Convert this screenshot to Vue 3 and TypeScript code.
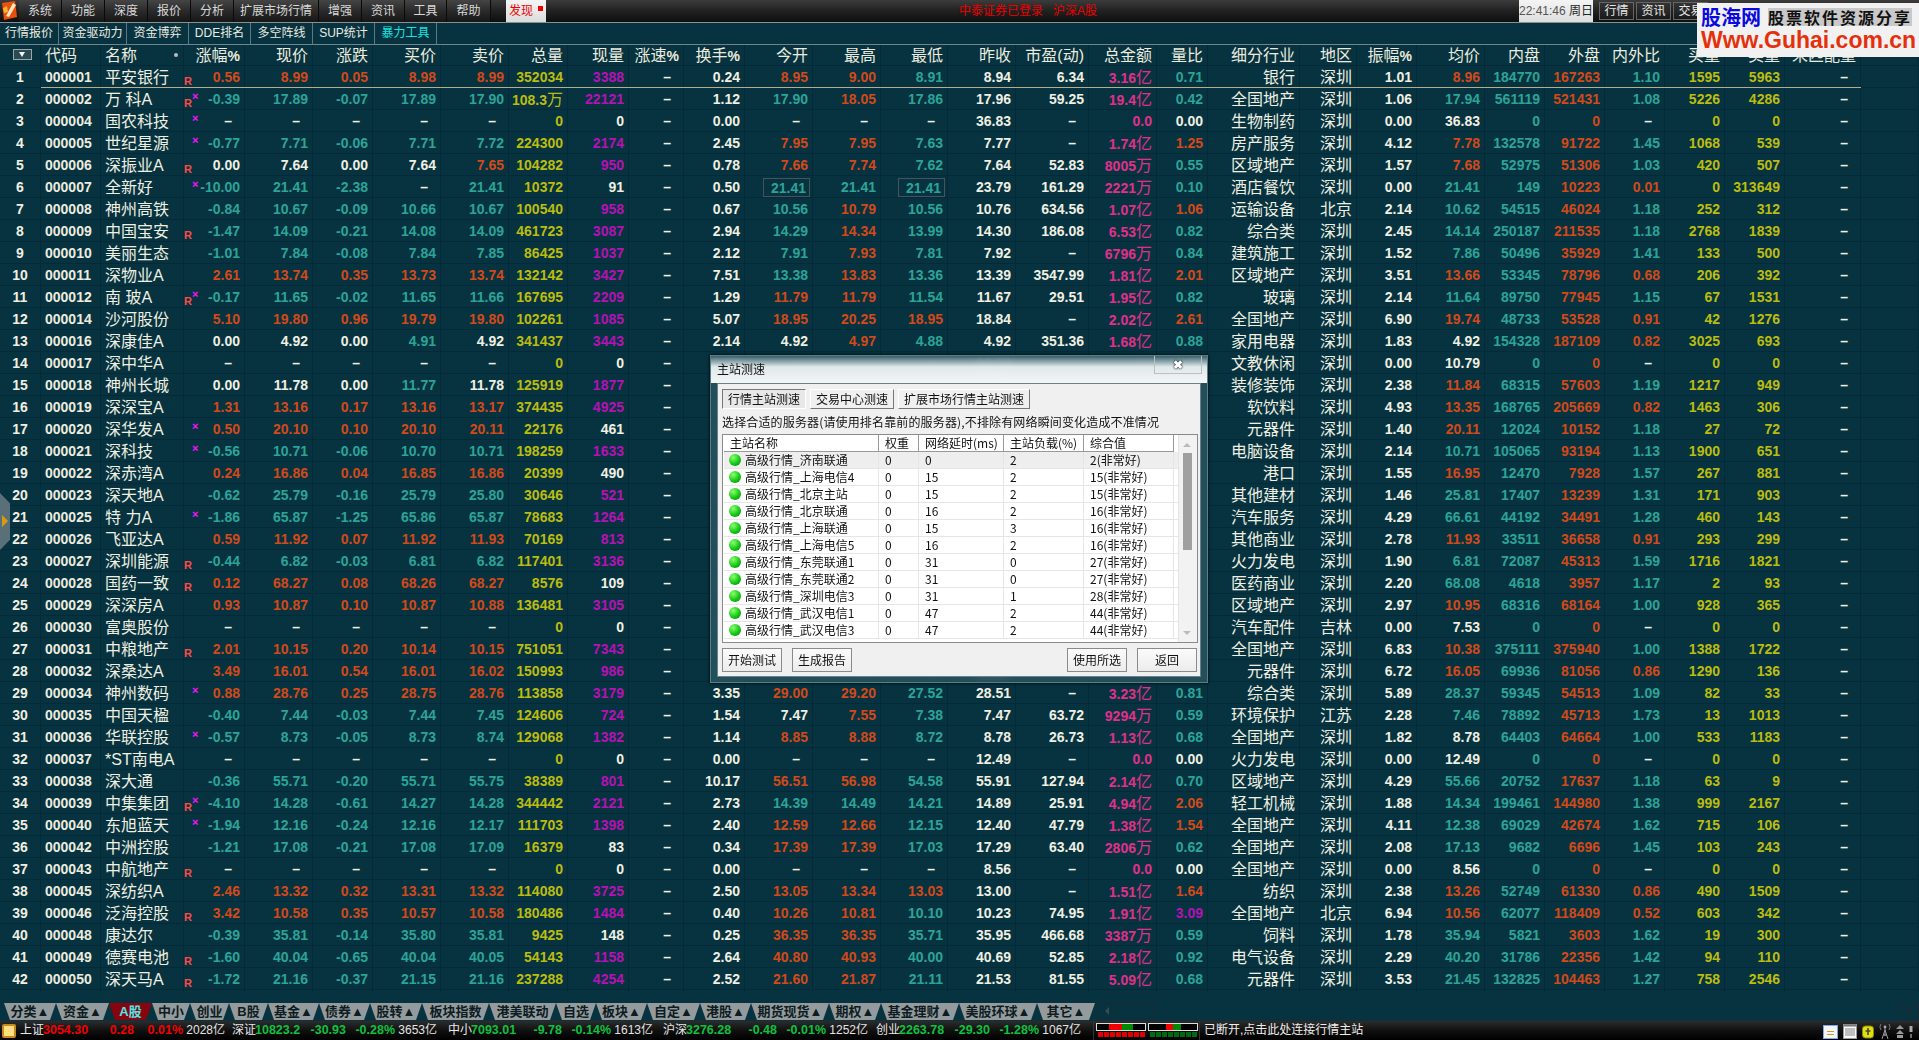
<template>
  <div class="app">
    <!-- top menu -->
    <div class="menubar">
      <svg class="logo" width="19" height="21" viewBox="0 0 19 21">
        <path d="M2 3 L15 1 L17 17 L4 20 Z" fill="#e8500f" />
        <path d="M6 16 L13 3 L16 5 L9 17 Z" fill="#ffe8c0" />
        <path d="M3 8 L7 6 L8 12 L4 13 Z" fill="#ffb030" />
      </svg>
      <div v-for="m in menus" :key="m.t" class="menu-item" :style="{ width: m.w + 'px' }">{{ m.t }}</div>
      <div class="find-tab">发现<i></i></div>
      <div class="login-msg">中泰证券已登录&nbsp;&nbsp;&nbsp;沪深A股</div>
      <div class="clock"><span class="clock-time">22:41:46</span> 周日</div>
      <div class="top-btn">行情</div>
      <div class="top-btn">资讯</div>
      <div class="top-btn">交易</div>
    </div>

    <!-- function tabs -->
    <div class="funcbar">
      <div v-for="f in funcs" :key="f.t" class="func-item" :class="{ cyan: f.t === '暴力工具' }" :style="{ width: f.w + 'px' }">{{ f.t }}</div>
    </div>

    <!-- quote table -->
    <div class="table">
      <div class="grid head">
        <div class="hcell center"><span class="sort-box"><i></i></span></div>
        <div class="hcell left code-h">代码</div>
        <div class="hcell left name-h">名称<b class="dot"></b></div>
        <div v-for="h in heads" :key="h" class="hcell"><template v-for="(p, i) in splitPct(h)" :key="i"><span :class="{ pct: p === '%' }">{{ p }}</span></template></div>
        <div class="hcell"></div>
      </div>
      <div v-for="r in rows" :key="r.no" class="grid row" :class="{ selected: r.no === 1 }">
        <div class="c no">{{ r.no }}</div>
        <div class="c code">{{ r.code }}</div>
        <div class="c name">{{ r.name }}</div>
        <div v-for="(c, i) in r.cells" :key="i" class="c num" :class="[c.cls, { dash: c.text === '–', cjk: c.cjk, marks: i === 0 }]">
          <template v-if="i === 0">
            <em v-if="r.mark.includes('R')" class="mark-r">R</em>
            <em v-if="r.mark.includes('x')" class="mark-x">×</em>
          </template>
          <span :class="{ boxed: c.boxed }">{{ c.text }}<span v-if="c.unit" class="unit">{{ c.unit }}</span></span>
        </div>
        <div class="c"></div>
      </div>
    </div>

    <!-- sheet tabs -->
    <div class="sheets">
      <div v-for="s in sheets" :key="s.t" class="sheet" :class="{ on: s.t === 'A股' }" :style="{ width: s.w + 'px' }">{{ s.t }}</div>
      <div class="scroll-box"><i class="tri-l"></i></div>
      <div class="scroll-end"><i class="tri-r"></i></div>
    </div>

    <!-- status bar -->
    <div class="status">
      <span class="st-icon"></span>
      <div v-for="g in indexes" :key="g.n" class="st-group" :style="{ width: g.w + 'px' }">
        <span class="st-name">{{ g.n }}</span>
        <span class="st-val" :class="g.up ? 'red' : 'green'">{{ g.v }}</span>
        <span class="st-chg" :class="g.up ? 'red' : 'green'">{{ g.c }}</span>
        <span class="st-pct" :class="g.up ? 'red' : 'green'">{{ g.p }}</span>
        <span class="st-amt">{{ g.a }}</span>
      </div>
      <div class="meters">
        <div class="meter">
          <div class="bar"><i class="k" style="width:12px"></i><i class="r" style="width:13px"></i><i class="g" style="width:11px"></i><i class="k" style="width:12px"></i></div>
          <div class="ticks"><i v-for="n in 8" :key="n" class="r"></i></div>
        </div>
        <div class="meter">
          <div class="bar"><i class="k" style="width:17px"></i><i class="r" style="width:7px"></i><i class="g" style="width:8px"></i><i class="k" style="width:16px"></i></div>
          <div class="ticks"><i v-for="n in 8" :key="n" class="g"></i></div>
        </div>
      </div>
      <div class="st-msg">已断开,点击此处连接行情主站</div>
      <div class="tray">
        <svg width="15" height="14" viewBox="0 0 15 14"><rect x="0.5" y="0.5" width="14" height="13" fill="#f4f4ff" stroke="#7fa8e0" /><rect x="4" y="6" width="7" height="1" fill="#c8a000" /><rect x="4" y="9" width="7" height="1" fill="#c8a000" /></svg>
        <svg width="14" height="15" viewBox="0 0 14 15"><rect x="0.5" y="0.5" width="13" height="14" fill="#f8f8f8" stroke="#999" /><rect x="0.5" y="0.5" width="13" height="2" fill="#777" /><path d="M2 5h10M2 7h10M2 9h10M2 11h10" stroke="#888" /></svg>
        <svg width="12" height="14" viewBox="0 0 12 14"><rect x="0.5" y="1" width="11" height="12" rx="3" fill="#e0e010" stroke="#8a8a00" /><path d="M6 3v7M3.5 6h5" stroke="#444" stroke-width="1.6" /></svg>
        <svg width="12" height="17" viewBox="0 0 12 17"><path d="M6 5v8M3 16 L6 7 L9 16M4 12h4" stroke="#999" fill="none" /><path d="M2 1a5 5 0 0 0 0 6M10 1a5 5 0 0 1 0 6" stroke="#777" fill="none" /><circle cx="6" cy="4" r="1.4" fill="#aaa" /></svg>
        <svg width="8" height="14" viewBox="0 0 8 14"><path d="M4 0 L8 4 H0 Z M4 5 L8 9 H0 Z" fill="#999" /><rect x="1" y="10" width="6" height="3" fill="#999" /></svg>
        <svg width="4" height="12" viewBox="0 0 4 12"><rect x="0.5" y="0" width="3" height="6" fill="#aaa" /><rect x="1.2" y="8" width="1.6" height="4" fill="#888" /></svg>
      </div>
    </div>

    <!-- left collapse handle -->
    <div class="edge-handle"><i></i></div>

    <!-- speed test dialog -->
    <div class="dialog">
      <div class="dlg-title">
        <span>主站测速</span>
        <div class="dlg-close">✖</div>
      </div>
      <div class="dlg-body">
        <div class="dlg-tabs">
          <div class="dlg-tab active">行情主站测速</div>
          <div class="dlg-tab">交易中心测速</div>
          <div class="dlg-tab wide">扩展市场行情主站测速</div>
        </div>
        <div class="dlg-tip">选择合适的服务器(请使用排名靠前的服务器),不排除有网络瞬间变化造成不准情况</div>
        <div class="listbox">
          <div class="list-main">
            <div class="list-row list-head">
              <div>主站名称</div><div>权重</div><div>网络延时(ms)</div><div>主站负载(%)</div><div>综合值</div>
            </div>
            <div v-for="(s, i) in servers" :key="s[0]" class="list-row" :class="{ sel: i === 0 }">
              <div class="srv"><i class="ball"></i>高级行情_{{ s[0] }}</div>
              <div>0</div>
              <div>{{ s[1] }}</div>
              <div>{{ s[2] }}</div>
              <div>{{ s[3] }}(非常好)</div>
            </div>
          </div>
          <div class="list-scroll">
            <i class="up"></i>
            <b></b>
            <i class="down"></i>
          </div>
        </div>
        <div class="dlg-btns">
          <div class="dlg-btn">开始测试</div>
          <div class="dlg-btn">生成报告</div>
          <div class="spacer"></div>
          <div class="dlg-btn">使用所选</div>
          <div class="dlg-btn">返回</div>
        </div>
      </div>
    </div>

    <!-- site watermark -->
    <div class="watermark">
      <div class="wm-top">
        <span class="wm-cn">股海网</span>
        <span class="wm-sub">股票软件资源分享</span>
      </div>
      <div class="wm-url">Www.Guhai.com.cn</div>
    </div>
  </div>
</template>

<script setup lang="ts">
const menus = [
  { t: '系统', w: 43 }, { t: '功能', w: 43 }, { t: '深度', w: 43 }, { t: '报价', w: 43 }, { t: '分析', w: 43 },
  { t: '扩展市场行情', w: 85 }, { t: '增强', w: 43 }, { t: '资讯', w: 43 }, { t: '工具', w: 42 }, { t: '帮助', w: 44 }
]

const funcs = [
  { t: '行情报价', w: 59 }, { t: '资金驱动力', w: 68 }, { t: '资金博弈', w: 62 }, { t: 'DDE排名', w: 62 },
  { t: '多空阵线', w: 62 }, { t: 'SUP统计', w: 62 }, { t: '暴力工具', w: 62 }
]

const heads = ['涨幅%', '现价', '涨跌', '买价', '卖价', '总量', '现量', '涨速%', '换手%', '今开', '最高', '最低', '昨收', '市盈(动)', '总金额', '量比', '细分行业', '地区', '振幅%', '均价', '内盘', '外盘', '内外比', '买量', '卖量', '未匹配量']

const splitPct = (h: string) => h.endsWith('%') ? [h.slice(0, -1), '%'] : [h]

// code name mark zf now chg buy sell vol cur turn open high low prev pe amt lb ind area amp avg in out ratio bv sv
const raw = `000001 平安银行 R 0.56 8.99 0.05 8.98 8.99 352034 3388 0.24 8.95 9.00 8.91 8.94 6.34 3.16亿 0.71 银行 深圳 1.01 8.96 184770 167263 1.10 1595 5963
000002 万_科A Rx -0.39 17.89 -0.07 17.89 17.90 108.3万 22121 1.12 17.90 18.05 17.86 17.96 59.25 19.4亿 0.42 全国地产 深圳 1.06 17.94 561119 521431 1.08 5226 4286
000004 国农科技 x - - - - - 0 0 0.00 - - - 36.83 - 0.0 0.00 生物制药 深圳 0.00 36.83 0 0 - 0 0
000005 世纪星源 x -0.77 7.71 -0.06 7.71 7.72 224300 2174 2.45 7.95 7.95 7.63 7.77 - 1.74亿 1.25 房产服务 深圳 4.12 7.78 132578 91722 1.45 1068 539
000006 深振业A R 0.00 7.64 0.00 7.64 7.65 104282 950 0.78 7.66 7.74 7.62 7.64 52.83 8005万 0.55 区域地产 深圳 1.57 7.68 52975 51306 1.03 420 507
000007 全新好 x -10.00 21.41 -2.38 - 21.41 10372 91 0.50 21.41 21.41 21.41 23.79 161.29 2221万 0.10 酒店餐饮 深圳 0.00 21.41 149 10223 0.01 0 313649
000008 神州高铁 . -0.84 10.67 -0.09 10.66 10.67 100540 958 0.67 10.56 10.79 10.56 10.76 634.56 1.07亿 1.06 运输设备 北京 2.14 10.62 54515 46024 1.18 252 312
000009 中国宝安 R -1.47 14.09 -0.21 14.08 14.09 461723 3087 2.94 14.29 14.34 13.99 14.30 186.08 6.53亿 0.82 综合类 深圳 2.45 14.14 250187 211535 1.18 2768 1839
000010 美丽生态 . -1.01 7.84 -0.08 7.84 7.85 86425 1037 2.12 7.91 7.93 7.81 7.92 - 6796万 0.84 建筑施工 深圳 1.52 7.86 50496 35929 1.41 133 500
000011 深物业A . 2.61 13.74 0.35 13.73 13.74 132142 3427 7.51 13.38 13.83 13.36 13.39 3547.99 1.81亿 2.01 区域地产 深圳 3.51 13.66 53345 78796 0.68 206 392
000012 南_玻A Rx -0.17 11.65 -0.02 11.65 11.66 167695 2209 1.29 11.79 11.79 11.54 11.67 29.51 1.95亿 0.82 玻璃 深圳 2.14 11.64 89750 77945 1.15 67 1531
000014 沙河股份 . 5.10 19.80 0.96 19.79 19.80 102261 1085 5.07 18.95 20.25 18.95 18.84 - 2.02亿 2.61 全国地产 深圳 6.90 19.74 48733 53528 0.91 42 1276
000016 深康佳A . 0.00 4.92 0.00 4.91 4.92 341437 3443 2.14 4.92 4.97 4.88 4.92 351.36 1.68亿 0.88 家用电器 深圳 1.83 4.92 154328 187109 0.82 3025 693
000017 深中华A . - - - - - 0 0 0.00 - - - 10.79 - 0.0 0.00 文教休闲 深圳 0.00 10.79 0 0 - 0 0
000018 神州长城 . 0.00 11.78 0.00 11.77 11.78 125919 1877 - - - - 11.78 - - - 装修装饰 深圳 2.38 11.84 68315 57603 1.19 1217 949
000019 深深宝A . 1.31 13.16 0.17 13.16 13.17 374435 4925 - - - - 12.99 - - - 软饮料 深圳 4.93 13.35 168765 205669 0.82 1463 306
000020 深华发A x 0.50 20.10 0.10 20.10 20.11 22176 461 - - - - 20.00 - - - 元器件 深圳 1.40 20.11 12024 10152 1.18 27 72
000021 深科技 x -0.56 10.71 -0.06 10.70 10.71 198259 1633 - - - - 10.77 - - - 电脑设备 深圳 2.14 10.71 105065 93194 1.13 1900 651
000022 深赤湾A . 0.24 16.86 0.04 16.85 16.86 20399 490 - - - - 16.82 - - - 港口 深圳 1.55 16.95 12470 7928 1.57 267 881
000023 深天地A . -0.62 25.79 -0.16 25.79 25.80 30646 521 - - - - 25.95 - - - 其他建材 深圳 1.46 25.81 17407 13239 1.31 171 903
000025 特_力A x -1.86 65.87 -1.25 65.86 65.87 78683 1264 - - - - 67.12 - - - 汽车服务 深圳 4.29 66.61 44192 34491 1.28 460 143
000026 飞亚达A . 0.59 11.92 0.07 11.92 11.93 70169 813 - - - - 11.85 - - - 其他商业 深圳 2.78 11.93 33511 36658 0.91 293 299
000027 深圳能源 R -0.44 6.82 -0.03 6.81 6.82 117401 3136 - - - - 6.85 - - - 火力发电 深圳 1.90 6.81 72087 45313 1.59 1716 1821
000028 国药一致 R 0.12 68.27 0.08 68.26 68.27 8576 109 - - - - 68.19 - - - 医药商业 深圳 2.20 68.08 4618 3957 1.17 2 93
000029 深深房A . 0.93 10.87 0.10 10.87 10.88 136481 3105 - - - - 10.77 - - - 区域地产 深圳 2.97 10.95 68316 68164 1.00 928 365
000030 富奥股份 . - - - - - 0 0 - - - - 7.53 - - - 汽车配件 吉林 0.00 7.53 0 0 - 0 0
000031 中粮地产 R 2.01 10.15 0.20 10.14 10.15 751051 7343 - - - - 9.95 - - - 全国地产 深圳 6.83 10.38 375111 375940 1.00 1388 1722
000032 深桑达A . 3.49 16.01 0.54 16.01 16.02 150993 986 - - - - 15.47 - - - 元器件 深圳 6.72 16.05 69936 81056 0.86 1290 136
000034 神州数码 x 0.88 28.76 0.25 28.75 28.76 113858 3179 3.35 29.00 29.20 27.52 28.51 - 3.23亿 0.81 综合类 深圳 5.89 28.37 59345 54513 1.09 82 33
000035 中国天楹 . -0.40 7.44 -0.03 7.44 7.45 124606 724 1.54 7.47 7.55 7.38 7.47 63.72 9294万 0.59 环境保护 江苏 2.28 7.46 78892 45713 1.73 13 1013
000036 华联控股 x -0.57 8.73 -0.05 8.73 8.74 129068 1382 1.14 8.85 8.88 8.72 8.78 26.73 1.13亿 0.68 全国地产 深圳 1.82 8.78 64403 64664 1.00 533 1183
000037 *ST南电A . - - - - - 0 0 0.00 - - - 12.49 - 0.0 0.00 火力发电 深圳 0.00 12.49 0 0 - 0 0
000038 深大通 . -0.36 55.71 -0.20 55.71 55.75 38389 801 10.17 56.51 56.98 54.58 55.91 127.94 2.14亿 0.70 区域地产 深圳 4.29 55.66 20752 17637 1.18 63 9
000039 中集集团 Rx -4.10 14.28 -0.61 14.27 14.28 344442 2121 2.73 14.39 14.49 14.21 14.89 25.91 4.94亿 2.06 轻工机械 深圳 1.88 14.34 199461 144980 1.38 999 2167
000040 东旭蓝天 x -1.94 12.16 -0.24 12.16 12.17 111703 1398 2.40 12.59 12.66 12.15 12.40 47.79 1.38亿 1.54 全国地产 深圳 4.11 12.38 69029 42674 1.62 715 106
000042 中洲控股 . -1.21 17.08 -0.21 17.08 17.09 16379 83 0.34 17.39 17.39 17.03 17.29 63.40 2806万 0.62 全国地产 深圳 2.08 17.13 9682 6696 1.45 103 243
000043 中航地产 R - - - - - 0 0 0.00 - - - 8.56 - 0.0 0.00 全国地产 深圳 0.00 8.56 0 0 - 0 0
000045 深纺织A . 2.46 13.32 0.32 13.31 13.32 114080 3725 2.50 13.05 13.34 13.03 13.00 - 1.51亿 1.64 纺织 深圳 2.38 13.26 52749 61330 0.86 490 1509
000046 泛海控股 R 3.42 10.58 0.35 10.57 10.58 180486 1484 0.40 10.26 10.81 10.10 10.23 74.95 1.91亿 3.09 全国地产 北京 6.94 10.56 62077 118409 0.52 603 342
000048 康达尔 . -0.39 35.81 -0.14 35.80 35.81 9425 148 0.25 36.35 36.35 35.71 35.95 466.68 3387万 0.59 饲料 深圳 1.78 35.94 5821 3603 1.62 19 300
000049 德赛电池 R -1.60 40.04 -0.65 40.04 40.05 54143 1158 2.64 40.80 40.93 40.00 40.69 52.85 2.18亿 0.92 电气设备 深圳 2.29 40.20 31786 22356 1.42 94 110
000050 深天马A R -1.72 21.16 -0.37 21.15 21.16 237288 4254 2.52 21.60 21.87 21.11 21.53 81.55 5.09亿 0.68 元器件 深圳 3.53 21.45 132825 104463 1.27 758 2546`

interface Cell { text: string; unit?: string; cls: string; boxed?: boolean; cjk?: boolean }

const isNil = (s: string) => s === '-'
const sign = (s: string) => isNil(s) ? 'white' : Number(s) > 0 ? 'up' : Number(s) < 0 ? 'down' : 'white'
const vs = (s: string, prev: string) => isNil(s) ? 'white' : Number(s) > Number(prev) ? 'up' : Number(s) < Number(prev) ? 'down' : 'white'

const mk = (s: string, cls: string, extra: Partial<Cell> = {}): Cell => {
  const m = s.match(/^(.*)([亿万])$/)
  return { text: isNil(s) ? '–' : m ? m[1] : s, unit: m ? m[2] : undefined, cls: isNil(s) ? 'white' : cls, ...extra }
}

const rows = raw.split('\n').map((line, idx) => {
  const f = line.trim().split(' ')
  const [code, name, mark, zf, now, chg, buy, sell, vol, cur, turn, open, high, low, prev, pe, amt, lb, ind, area, amp, avg, inn, out, ratio, bv, sv] = f
  const lbCls = isNil(lb) ? 'white' : Number(lb) >= 3 ? 'magenta' : Number(lb) >= 1 ? 'up' : Number(lb) > 0 ? 'down' : 'white'
  const rowSix = code === '000007'
  const cells: Cell[] = [
    mk(zf, sign(zf)), mk(now, vs(now, prev)), mk(chg, sign(chg)), mk(buy, vs(buy, prev)), mk(sell, vs(sell, prev)),
    mk(vol, 'yellow'), mk(cur, Number(cur) >= 500 ? 'magenta' : 'white'), mk('-', 'white'), mk(turn, 'white'),
    mk(open, vs(open, prev), { boxed: rowSix }), mk(high, vs(high, prev)), mk(low, vs(low, prev), { boxed: rowSix }),
    mk(prev, 'white'), mk(pe, 'white'), mk(amt, 'pink'), mk(lb, lbCls),
    mk(ind, 'white', { cjk: true }), mk(area, 'white', { cjk: true }), mk(amp, 'white'), mk(avg, vs(avg, prev)),
    mk(inn, 'down'), mk(out, 'up'), mk(ratio, Number(ratio) < 1 ? 'up' : 'down'), mk(bv, 'yellow'), mk(sv, 'yellow'), mk('-', 'white')
  ]
  return { no: idx + 1, code, name: name.replace('_', ' '), mark, cells }
})

const sheets = [
  { t: '分类▲', w: 52 }, { t: '资金▲', w: 53 }, { t: 'A股', w: 43 }, { t: '中小', w: 38 }, { t: '创业', w: 39 }, { t: 'B股', w: 39 },
  { t: '基金▲', w: 51 }, { t: '债券▲', w: 51 }, { t: '股转▲', w: 52 }, { t: '板块指数', w: 67 }, { t: '港美联动', w: 67 }, { t: '自选', w: 40 },
  { t: '板块▲', w: 51 }, { t: '自定▲', w: 53 }, { t: '港股▲', w: 51 }, { t: '期货现货▲', w: 78 }, { t: '期权▲', w: 52 },
  { t: '基金理财▲', w: 78 }, { t: '美股环球▲', w: 78 }, { t: '其它▲', w: 58 }
]

const indexes = [
  { n: '上证', v: '3054.30', c: '0.28', p: '0.01%', a: '2028亿', up: true, w: 212 },
  { n: '深证', v: '10823.2', c: '-30.93', p: '-0.28%', a: '3653亿', up: false, w: 216 },
  { n: '中小', v: '7093.01', c: '-9.78', p: '-0.14%', a: '1613亿', up: false, w: 215 },
  { n: '沪深', v: '3276.28', c: '-0.48', p: '-0.01%', a: '1252亿', up: false, w: 213 },
  { n: '创业', v: '2263.78', c: '-29.30', p: '-1.28%', a: '1067亿', up: false, w: 217 }
]

const servers: [string, number, number, number][] = [
  ['济南联通', 0, 2, 2], ['上海电信4', 15, 2, 15], ['北京主站', 15, 2, 15], ['北京联通', 16, 2, 16],
  ['上海联通', 15, 3, 16], ['上海电信5', 16, 2, 16], ['东莞联通1', 31, 0, 27], ['东莞联通2', 31, 0, 27],
  ['深圳电信3', 31, 1, 28], ['武汉电信1', 47, 2, 44], ['武汉电信3', 47, 2, 44]
]
</script>

<style>
html, body { margin: 0; background: #06333f; overflow: hidden; }
</style>

<style scoped>
.app {
  position: relative;
  width: 1919px;
  height: 1040px;
  overflow: hidden;
  display: flex;
  flex-direction: column;
  background: #06333f;
  color: #f0efe2;
  font-family: "Liberation Sans", "Noto Sans CJK SC", sans-serif;
  font-size: 12px;
}

/* menu */
.menubar {
  height: 22px;
  flex: none;
  display: flex;
  align-items: stretch;
  background: linear-gradient(#3c3c3c, #232323 45%, #0e0e0e);
  border-bottom: 1px solid #8b9090;
  line-height: 22px;
  color: #d8d8d8;
}
.logo { flex: none; display: block; }
.menu-item {
  flex: none;
  text-align: center;
  background: linear-gradient(#454545, #2a2a2a 50%, #161616);
  border-right: 1px solid #0a0a0a;
  box-sizing: border-box;
}
.find-tab {
  flex: none;
  position: relative;
  width: 40px;
  margin-left: 15px;
  padding-left: 3px;
  box-sizing: border-box;
  background: linear-gradient(#f4f4f4, #dcdcdc);
  color: #f00000;
}
.find-tab i {
  position: absolute;
  right: 3px;
  top: 6px;
  width: 5px;
  height: 5px;
  background: #f00000;
}
.login-msg {
  flex: none;
  width: 170px;
  margin-left: 413px;
  color: #e80000;
  white-space: nowrap;
}
.clock {
  flex: none;
  width: 74px;
  margin-left: 390px;
  background: linear-gradient(#f4f4f4, #dedede);
  color: #222;
  text-align: center;
  white-space: nowrap;
}
.clock-time { color: #555; }
.top-btn {
  flex: none;
  width: 35px;
  height: 18px;
  margin: 2px 0 0 2px;
  line-height: 17px;
  box-sizing: border-box;
  border: 1px solid #666;
  background: linear-gradient(#333, #1a1a1a);
  text-align: center;
  color: #e8e8e8;
}
.clock + .top-btn { margin-left: 6px; }

/* function tabs */
.funcbar {
  height: 21px;
  flex: none;
  display: flex;
  border-bottom: 1px solid #71848a;
  line-height: 21px;
}
.func-item {
  flex: none;
  box-sizing: border-box;
  text-align: center;
  border-right: 1px solid #5d7880;
  color: #eceae0;
}
.func-item.cyan { color: #13e2e2; }

/* table */
.grid {
  display: grid;
  grid-template-columns: 41px 60px 83px 61px 68px 60px 68px 68px 59px 61px 55px 61px 68px 68px 67px 68px 73px 68px 51px 92px 57px 60px 68px 60px 60px 60px 60px 60px 76px 58px;
}
.table { flex: none; height: 945px; }
.head { height: 21px; line-height: 22px; font-size: 16px; border-bottom: 1px solid #02283a; box-sizing: border-box; }
.hcell {
  text-align: right;
  padding-right: 4px;
  border-right: 1px solid #032a38;
  white-space: nowrap;
  overflow: visible;
  color: #ecebdf;
  position: relative;
}
.hcell.left { text-align: left; padding: 0 0 0 4px; }
.hcell.center { padding: 0; }
.pct { font-weight: bold; font-size: 14px; }
.dot {
  position: absolute;
  right: 5px;
  top: 8px;
  width: 4px;
  height: 4px;
  border-radius: 50%;
  background: #bbb;
}
.sort-box {
  position: absolute;
  left: 13px;
  top: 4px;
  width: 17px;
  height: 9px;
  border: 1px solid #9aa6a8;
  background: #2b4a54;
  display: block;
}
.sort-box i {
  position: absolute;
  left: 5px;
  top: 2px;
  border-left: 3.5px solid transparent;
  border-right: 3.5px solid transparent;
  border-top: 5px solid #f4f4f4;
}
.row { height: 22px; box-sizing: border-box; border-bottom: 1px solid #032a38; position: relative; line-height: 23px; }
.row.selected::after {
  content: "";
  position: absolute;
  left: 41px;
  width: 1820px;
  bottom: -1px;
  height: 1px;
  background: #b5ad8c;
}
.c { border-right: 1px solid #032a38; white-space: nowrap; position: relative; font-size: 14px; font-weight: bold; }
.no { text-align: center; }
.code { text-align: left; padding-left: 4px; color: #ecebdf; }
.name { font-size: 16px; font-weight: normal; padding-left: 4px; overflow: hidden; }
.num { text-align: right; padding-right: 4px; }
.num.dash { padding-right: 12px; }
.num.cjk { font-size: 16px; font-weight: normal; padding-right: 4px; }
.unit { font-size: 16px; font-weight: normal; }
.up { color: #d2491a; }
.down { color: #2da398; }
.white { color: #f0efe2; }
.yellow { color: #bcbc10; }
.magenta { color: #b511b5; }
.pink { color: #e0308c; }
.boxed {
  display: inline-block;
  width: 47px;
  height: 19px;
  line-height: 18px;
  box-sizing: border-box;
  border: 1px solid #47525a;
  padding-right: 3px;
  margin-right: -2px;
  vertical-align: top;
  margin-top: 2px;
}
.mark-r {
  position: absolute;
  left: 0;
  top: 9px;
  font: bold 11px/12px "Liberation Sans", sans-serif;
  color: #ff4a4a;
}
.mark-x {
  position: absolute;
  left: 8px;
  top: 2px;
  font: bold 11px/12px "Liberation Sans", sans-serif;
  color: #ff10ff;
}

/* sheet tabs */
.sheets {
  flex: none;
  height: 17px;
  margin-top: 13px;
  padding-left: 4px;
  display: flex;
  position: relative;
  line-height: 17px;
}
.sheet {
  flex: none;
  box-sizing: border-box;
  text-align: center;
  background: #959b9c;
  color: #0c1c22;
  font-size: 13px;
  font-weight: bold;
  white-space: nowrap;
  clip-path: polygon(0 0, 100% 0, calc(100% - 6px) 100%, 6px 100%);
}
.sheet.on { background: #86050f; color: #4fe8e8; }
.scroll-box {
  flex: none;
  box-sizing: border-box;
  width: 57px;
  height: 16px;
  margin-left: 2px;
  border: 1px solid #1a2a30;
  position: relative;
}
.scroll-box::after { content: ""; position: absolute; left: 17px; top: 0; bottom: 0; width: 1px; background: #1a2a30; }
.tri-l {
  position: absolute;
  left: 7px;
  top: 3px;
  border-top: 4px solid transparent;
  border-bottom: 4px solid transparent;
  border-right: 4px solid #3a4a50;
}
.scroll-end {
  position: absolute;
  right: 0;
  top: 1px;
  width: 18px;
  height: 15px;
  box-sizing: border-box;
  border: 1px solid #1a2a30;
}
.tri-r {
  position: absolute;
  left: 6px;
  top: 2px;
  border-top: 4px solid transparent;
  border-bottom: 4px solid transparent;
  border-left: 4px solid #1a2a30;
}

/* status bar */
.status {
  flex: none;
  height: 19px;
  margin-top: 1px;
  display: flex;
  align-items: stretch;
  position: relative;
  background: linear-gradient(#2c2c2c, #0e0e0e 55%, #000);
  line-height: 19px;
  white-space: nowrap;
}
.st-icon {
  flex: none;
  width: 14px;
  height: 14px;
  margin: 3px 4px 0 2px;
  box-sizing: border-box;
  border: 2px solid #c88a20;
  border-radius: 2px;
  background: #ffe080;
}
.st-group { flex: none; display: flex; box-sizing: border-box; }
.st-name { flex: none; width: 23px; color: #e8e8e8; }
.st-val, .st-chg, .st-pct { flex: none; font-size: 12.5px; font-weight: bold; }
.st-val { width: 50px; }
.st-chg { width: 41px; text-align: right; }
.st-pct { width: 49px; text-align: right; }
.st-amt { flex: none; width: 42px; text-align: right; color: #e4e4e4; }
.red { color: #f00000; }
.green { color: #10c040; }
.meters {
  flex: none;
  display: flex;
  gap: 2px;
  width: 107px;
  padding-left: 2px;
  box-sizing: border-box;
  border-left: 1px solid #333;
  border-right: 1px solid #333;
}
.meter { width: 50px; padding-top: 2px; }
.bar { height: 6px; border: 1px solid #ddd; display: flex; }
.bar i { display: block; height: 100%; }
.bar .k { background: #000; }
.bar .r { background: #f00000; }
.bar .g { background: #008a00; }
.ticks { display: flex; gap: 1px; margin: 1px 0 0 2px; line-height: 0; }
.ticks i { display: block; width: 5px; height: 5px; }
.ticks .r { background: #e00000; }
.ticks .g { background: #006a10; }
.st-msg { flex: none; margin-left: 4px; color: #eee; }
.tray {
  position: absolute;
  right: 6px;
  top: 2px;
  display: flex;
  align-items: center;
  gap: 5px;
}
.tray svg { display: block; }

/* left handle */
.edge-handle {
  position: absolute;
  left: 0;
  top: 493px;
  width: 10px;
  height: 57px;
  background: #5a7078;
  clip-path: polygon(0 0, 100% 18%, 100% 82%, 0 100%);
}
.edge-handle i {
  position: absolute;
  left: 2px;
  top: 22px;
  border-top: 6px solid transparent;
  border-bottom: 6px solid transparent;
  border-left: 6px solid #d89a10;
}

/* dialog */
.dialog {
  position: absolute;
  left: 710px;
  top: 355px;
  width: 498px;
  height: 328px;
  box-sizing: border-box;
  border: 1px solid #5d7d85;
  padding: 0 6px 5px;
  background: rgba(44, 90, 102, 0.72);
  backdrop-filter: blur(5px);
  box-shadow: 0 0 3px #000;
  display: flex;
  flex-direction: column;
  color: #111;
  font-family: "Noto Sans CJK SC", "Liberation Sans", sans-serif;
}
.dlg-title {
  flex: none;
  height: 27px;
  margin: 0 -6px;
  padding-left: 6px;
  position: relative;
  line-height: 26px;
  background: linear-gradient(rgba(60, 100, 110, 0.7), rgba(240, 245, 245, 0.92) 40%, #f4f6f6);
}
.dlg-close {
  position: absolute;
  right: 5px;
  top: 0;
  width: 48px;
  height: 18px;
  box-sizing: border-box;
  border: 1px solid #b8c0c0;
  border-top: 0;
  text-align: center;
  color: #fff;
  font-size: 12px;
  font-weight: bold;
  line-height: 15px;
  text-shadow: 0 0 2px #000, 0 0 1px #000;
}
.dlg-body {
  flex: 1;
  border: 1px solid #6c8086;
  background: #f0f0f0;
  padding: 5px 2px 0 4px;
  display: flex;
  flex-direction: column;
  box-sizing: border-box;
  min-height: 0;
}
.dlg-tabs { flex: none; display: flex; gap: 4px; height: 20px; }
.dlg-tab {
  flex: none;
  width: 84px;
  box-sizing: border-box;
  line-height: 18px;
  text-align: center;
  background: #f0f0f0;
  border: 1px solid;
  border-color: #fff #777 #777 #fff;
}
.dlg-tab.active { background: #e8e8e8; border-color: #777 #fff #fff #777; }
.dlg-tab.wide { width: 132px; }
.dlg-tip { flex: none; height: 25px; line-height: 26px; white-space: nowrap; letter-spacing: 0.15px; }
.listbox {
  flex: none;
  height: 209px;
  box-sizing: border-box;
  border: 1px solid #8a8a8a;
  background: #fff;
  display: flex;
}
.list-main { flex: 1; min-width: 0; padding-left: 1px; }
.list-row {
  display: grid;
  grid-template-columns: 155px 40px 85px 80px 90px;
  height: 17px;
  line-height: 16px;
  box-sizing: border-box;
  border-bottom: 1px solid #e6e6e6;
  white-space: nowrap;
}
.list-row > div { box-sizing: border-box; padding-left: 6px; border-right: 1px solid #e6e6e6; }
.list-row.sel { background: #eeeeee; }
.list-head { height: 17px; border-bottom: 0; background: #fff; }
.list-head > div { border-right: 1px solid #999; border-bottom: 1px solid #999; }
.srv { padding-left: 5px !important; display: flex; align-items: center; }
.ball {
  flex: none;
  width: 12px;
  height: 12px;
  margin-right: 4px;
  border-radius: 50%;
  background: radial-gradient(circle at 35% 30%, #8dff70, #14c814 55%, #067a06);
}
.list-scroll {
  flex: none;
  width: 18px;
  position: relative;
  border-left: 1px solid #e4e4e4;
  background: #f2f2f2;
}
.list-scroll b {
  position: absolute;
  left: 4px;
  top: 18px;
  width: 9px;
  height: 97px;
  background: #a0a0a0;
}
.list-scroll i {
  position: absolute;
  left: 4px;
  border-left: 4px solid transparent;
  border-right: 4px solid transparent;
}
.list-scroll .up { top: 8px; border-bottom: 4px solid #bbb; }
.list-scroll .down { bottom: 7px; border-top: 4px solid #bbb; }
.dlg-btns { flex: none; display: flex; gap: 10px; margin-top: 5px; padding-right: 1px; }
.dlg-btn {
  flex: none;
  width: 60px;
  height: 24px;
  box-sizing: border-box;
  line-height: 22px;
  text-align: center;
  border: 1px solid #8a8a8a;
  background: linear-gradient(#fbfbfb, #ececec);
}
.spacer { flex: 1; }

/* watermark */
.watermark {
  position: absolute;
  left: 1697px;
  top: 3px;
  width: 222px;
  height: 54px;
  box-sizing: border-box;
  background: #f1f1f1;
  padding: 3px 0 0 4px;
  z-index: 5;
  overflow: hidden;
}
.wm-top { display: flex; align-items: center; height: 22px; }
.wm-cn {
  font: bold 20px/22px "Noto Sans CJK SC", sans-serif;
  color: #0a0ae0;
  white-space: nowrap;
}
.wm-sub {
  margin-left: 7px;
  width: 144px;
  height: 18px;
  background: #c9c9c9;
  font: bold 16px/18px "Noto Sans CJK SC", sans-serif;
  letter-spacing: 2px;
  color: #111;
  white-space: nowrap;
  text-align: center;
}
.wm-url {
  font: bold 23px/25px "Liberation Sans", sans-serif;
  color: #e6300c;
  white-space: nowrap;
}
</style>
